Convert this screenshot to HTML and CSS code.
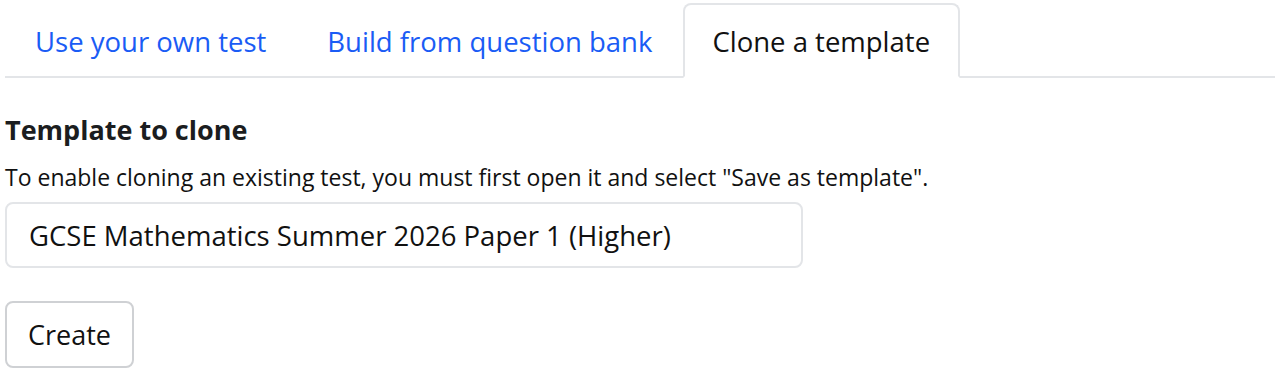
FILE: index.html
```html
<!DOCTYPE html>
<html lang="en">
<head>
  <meta charset="UTF-8" />
  <title>New test</title>
  <meta name="viewport" content="width=device-width, initial-scale=1.0"/>
  <link rel="stylesheet" href="styles.css">
</head>
<body>
  <div class="page">
    <ul class="nav-tabs">
      <li><a href="#" class="nav-link">Use your own test</a></li>
      <li><a href="#" class="nav-link">Build from question bank</a></li>
      <li><a href="#" class="nav-link active">Clone a template</a></li>
    </ul>

    <form class="clone-form" onsubmit="return false;">
      <h2 class="form-title">Template to clone</h2>
      <p class="form-help">To enable cloning an existing test, you must first open it and select "Save as template".</p>
      <select class="form-select">
        <option>GCSE Mathematics Summer 2026 Paper 1 (Higher)</option>
      </select>
      <button type="submit" class="btn">Create</button>
    </form>
  </div>
</body>
</html>
```

FILE: styles.css
```css
* {
  margin: 0;
  padding: 0;
  box-sizing: border-box;
}

body {
  font-family: 'Open Sans', 'Noto Sans', sans-serif;
  color: #212529;
  background: #fff;
  padding: 3px 5px 0 5px;
}

.nav-tabs {
  display: flex;
  list-style: none;
  border-bottom: 2px solid #e3e5e8;
}

.nav-link {
  display: block;
  margin-bottom: -2px;
  padding: 18px 30px 15px 29px;
  font-size: 27.5px;
  line-height: 40px;
  color: #1a5cf5;
  text-decoration: none;
  border: 1px solid transparent;
  border-top-left-radius: 8px;
  border-top-right-radius: 8px;
}

.nav-link.active {
  color: #111;
  border: 2px solid #e3e5e8;
  border-bottom-color: #fff;
  padding: 17px 28px 14px 27px;
}

.form-title {
  margin-top: 34px;
  font-size: 27px;
  font-weight: 700;
  line-height: 36px;
  color: #1b1d20;
}

.form-help {
  margin-top: 13px;
  font-size: 23px;
  line-height: 32px;
  color: #111;
}

.form-select {
  display: block;
  width: 798px;
  height: 66px;
  margin-top: 9px;
  padding: 0 22px;
  font-family: inherit;
  font-size: 27.5px;
  color: #111;
  background: #fff;
  border: 2px solid #e3e5e8;
  border-radius: 8px;
  appearance: none;
  -webkit-appearance: none;
}

.btn {
  display: block;
  height: 67px;
  margin-top: 33px;
  padding: 0 21px;
  font-family: inherit;
  font-size: 27px;
  color: #111;
  background: #fff;
  border: 2px solid #cfd1d4;
  border-radius: 8px;
  cursor: pointer;
}
```
